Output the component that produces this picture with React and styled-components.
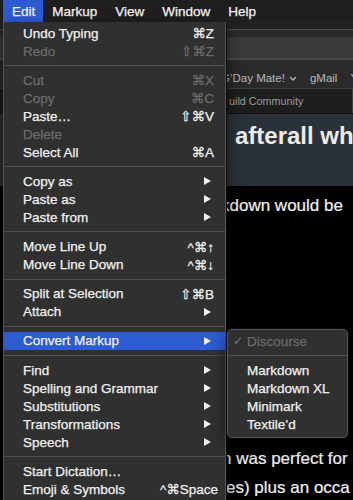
import React from 'react';
import styled, { createGlobalStyle } from 'styled-components';

const Global = createGlobalStyle`
  html, body { margin: 0; padding: 0; background: #000; }
  body { font-family: "Liberation Sans", "DejaVu Sans", Arial, sans-serif; }
`;

const FONT = `"Liberation Sans", "DejaVu Sans", Arial, sans-serif`;

const Screen = styled.div`
  position: relative;
  width: 353px;
  height: 500px;
  overflow: hidden;
  background: #000;
  display: flex;
  flex-direction: column;
  font-family: ${FONT};
`;

const MenuBar = styled.div`
  flex: none;
  height: 22px;
  display: flex;
  align-items: stretch;
  padding-left: 3px;
  background: #1f1f1f;
`;

const MenuTitle = styled.div`
  display: flex;
  align-items: center;
  padding: 0 ${p => (p.$active ? '8px' : '9px')} 0 9px;
  font-size: 13.5px;
  color: #f4f4f4;
  -webkit-text-stroke: 0.25px #f4f4f4;
  background: ${p => (p.$active ? '#2d5bd1' : 'transparent')};
`;

const TitleBar = styled.div`
  flex: none;
  height: 7px;
  background: #222;
  border-bottom: 1px solid #4d4d4d;
`;

const TabStrip = styled.div`
  flex: none;
  height: 7px;
  background: #2a2a2a;
`;

const Toolbar = styled.div`
  flex: none;
  height: 21px;
  background: #3a3a3a;
  border-bottom: 2px solid #4a4a4a;
`;

const BookmarksBar = styled.div`
  flex: none;
  height: 20px;
  padding: 8px 0 0 221px;
  display: flex;
  align-items: center;
  gap: 13px;
  background: #2a2a2a;
  color: #b8b8b8;
  font-size: 11.5px;
  white-space: nowrap;
`;

const Bookmark = styled.span`
  flex: none;
  display: inline-flex;
  align-items: center;
  gap: 4px;
`;

const TabBar = styled.div`
  flex: none;
  height: 24px;
  border-top: 1px solid #3e3e3e;
  background: #1d1d1d;
  display: flex;
  align-items: stretch;
  padding-left: 229px;
`;

const Tab = styled.div`
  flex: 1;
  display: flex;
  align-items: center;
  color: #9c9c9c;
  font-size: 10.8px;
  white-space: nowrap;
  border-right: 1px solid #3e3e3e;
`;

const Header = styled.div`
  flex: none;
  height: 64px;
  padding: 8px 0 0 235px;
  background: #2b3139;
  border-top: 1px solid #111;
`;

const Title = styled.h1`
  margin: 0;
  font-size: 24px;
  line-height: 28px;
  font-weight: bold;
  color: #ececec;
  white-space: nowrap;
`;

const Body = styled.div`
  flex: 1;
  padding-top: 5px;
  background: #000;
  color: #f0f0f0;
  font-size: 17px;
  line-height: 29px;
  -webkit-text-stroke: 0.2px #f0f0f0;
`;

const Paragraph = styled.div`
  margin-bottom: ${p => p.$after || 0}px;
`;

const Line = styled.div`
  padding-left: ${p => p.$indent}px;
  white-space: nowrap;
`;

/* ---------- menus ---------- */

const Menu = styled.div`
  position: absolute;
  box-sizing: border-box;
  left: 3px;
  top: 22px;
  width: 223px;
  padding: 2px 0 6px;
  background: #303030;
  border: 1px solid #555;
  border-top: none;
  border-radius: 0 0 5px 5px;
  box-shadow: 1px 0 0 #0c0c0c, 0 6px 16px rgba(0, 0, 0, 0.6);
  font-size: 13.5px;
`;

const SubMenu = styled.div`
  position: absolute;
  box-sizing: border-box;
  left: 227px;
  top: 329px;
  width: 121px;
  padding: 2px 0 4px;
  background: #303030;
  border: 1px solid #555;
  border-radius: 5px;
  box-shadow: 0 0 0 1px #0c0c0c, 0 6px 16px rgba(0, 0, 0, 0.6);
  font-size: 13.5px;
`;

const Row = styled.div`
  display: flex;
  align-items: center;
  height: 18px;
  padding: 0 11px 0 ${p => (p.$sub ? 5 : 19)}px;
  color: ${p => (p.$disabled ? '#6c6c6c' : '#f0f0f0')};
  -webkit-text-stroke: 0.25px ${p => (p.$disabled ? '#6c6c6c' : '#f0f0f0')};
  background: ${p => (p.$active ? '#2d5bd1' : 'transparent')};
  white-space: nowrap;
`;

const Label = styled.span`
  flex: 1;
`;

const Check = styled.span`
  width: 14px;
  flex: none;
  font-size: 12px;
  color: #6c6c6c;
`;

const Shortcut = styled.span`
  font-family: ${FONT};
  margin-right: ${p => (p.$overhang ? -4 : 0)}px;
`;

const Separator = styled.div`
  height: 11.2px;
  display: flex;
  align-items: center;
  &::after {
    content: '';
    flex: 1;
    height: 1px;
    background: #4f4f4f;
  }
`;

const Arrow = () => (
  <svg width="7" height="8" viewBox="0 0 7 8" style={{ marginRight: 3 }}>
    <polygon points="0,0 7,4 0,8" fill="#f0f0f0" />
  </svg>
);

const Chevron = () => (
  <svg width="8" height="5" viewBox="0 0 8 5">
    <polyline points="1,1 4,4 7,1" fill="none" stroke="#b8b8b8" strokeWidth="1.3" />
  </svg>
);

const SEP = 'sep';
const editItems = [
  { label: 'Undo Typing', sc: '⌘Z' },
  { label: 'Redo', sc: '⇧⌘Z', disabled: true },
  SEP,
  { label: 'Cut', sc: '⌘X', disabled: true },
  { label: 'Copy', sc: '⌘C', disabled: true },
  { label: 'Paste…', sc: '⇧⌘V' },
  { label: 'Delete', disabled: true },
  { label: 'Select All', sc: '⌘A' },
  SEP,
  { label: 'Copy as', sub: true },
  { label: 'Paste as', sub: true },
  { label: 'Paste from', sub: true },
  SEP,
  { label: 'Move Line Up', sc: '^⌘↑' },
  { label: 'Move Line Down', sc: '^⌘↓' },
  SEP,
  { label: 'Split at Selection', sc: '⇧⌘B' },
  { label: 'Attach', sub: true },
  SEP,
  { label: 'Convert Markup', sub: true, active: true },
  SEP,
  { label: 'Find', sub: true },
  { label: 'Spelling and Grammar', sub: true },
  { label: 'Substitutions', sub: true },
  { label: 'Transformations', sub: true },
  { label: 'Speech', sub: true },
  SEP,
  { label: 'Start Dictation…' },
  { label: 'Emoji & Symbols', sc: '^⌘Space', overhang: true },
];

const markupItems = [
  { label: 'Discourse', checked: true, disabled: true },
  SEP,
  { label: 'Markdown' },
  { label: 'Markdown XL' },
  { label: 'Minimark' },
  { label: 'Textile’d' },
];

export default function App() {
  return (
    <>
      <Global />
      <Screen>
        <MenuBar>
          <MenuTitle $active>Edit</MenuTitle>
          <MenuTitle>Markup</MenuTitle>
          <MenuTitle>View</MenuTitle>
          <MenuTitle>Window</MenuTitle>
          <MenuTitle>Help</MenuTitle>
        </MenuBar>
        <TitleBar />
        <TabStrip />
        <Toolbar />
        <BookmarksBar>
          <Bookmark>G’Day Mate! <Chevron /></Bookmark>
          <Bookmark>gMail</Bookmark>
          <Bookmark>Y</Bookmark>
        </BookmarksBar>
        <TabBar>
          <Tab>uild Community</Tab>
        </TabBar>
        <Header>
          <Title>afterall wh</Title>
        </Header>
        <Body>
          <Paragraph $after={224}>
            <Line $indent={221}>kdown would be</Line>
          </Paragraph>
          <Paragraph>
            <Line $indent={222}>n was perfect for</Line>
            <Line $indent={226}>es) plus an occa</Line>
          </Paragraph>
        </Body>

        <Menu>
          {editItems.map((it, i) =>
            it === SEP ? (
              <Separator key={i} />
            ) : (
              <Row key={i} $disabled={it.disabled} $active={it.active}>
                <Label>{it.label}</Label>
                {it.sc && <Shortcut $overhang={it.overhang}>{it.sc}</Shortcut>}
                {it.sub && <Arrow />}
              </Row>
            )
          )}
        </Menu>

        <SubMenu>
          {markupItems.map((it, i) =>
            it === SEP ? (
              <Separator key={i} />
            ) : (
              <Row key={i} $sub $disabled={it.disabled}>
                <Check>{it.checked ? '✓' : ''}</Check>
                <Label>{it.label}</Label>
              </Row>
            )
          )}
        </SubMenu>
      </Screen>
    </>
  );
}
